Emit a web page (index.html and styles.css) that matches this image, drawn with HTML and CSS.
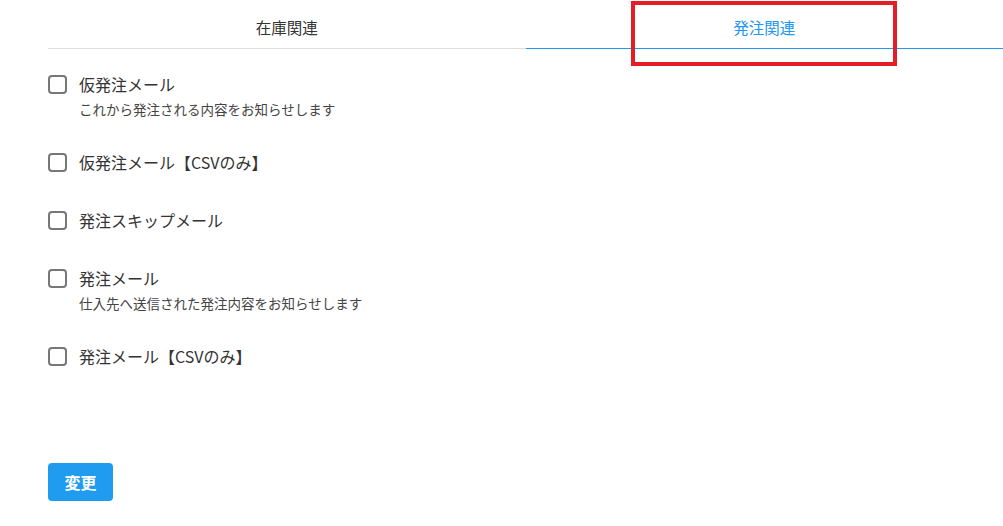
FILE: index.html
```html
<!DOCTYPE html>
<html lang="ja">
<head>
<meta charset="utf-8">
<link rel="stylesheet" href="styles.css">
</head>
<body>
<div class="page">
  <div class="tabs">
    <div class="tab">在庫関連</div>
    <div class="tab active">発注関連</div>
  </div>
  <div class="list">
    <label class="item">
      <input type="checkbox" class="cb">
      <div class="texts">
        <div class="name">仮発注メール</div>
        <div class="desc">これから発注される内容をお知らせします</div>
      </div>
    </label>
    <label class="item">
      <input type="checkbox" class="cb">
      <div class="texts">
        <div class="name">仮発注メール【CSVのみ】</div>
      </div>
    </label>
    <label class="item">
      <input type="checkbox" class="cb">
      <div class="texts">
        <div class="name">発注スキップメール</div>
      </div>
    </label>
    <label class="item">
      <input type="checkbox" class="cb">
      <div class="texts">
        <div class="name">発注メール</div>
        <div class="desc">仕入先へ送信された発注内容をお知らせします</div>
      </div>
    </label>
    <label class="item">
      <input type="checkbox" class="cb">
      <div class="texts">
        <div class="name">発注メール【CSVのみ】</div>
      </div>
    </label>
  </div>
  <button class="submit">変更</button>
</div>
<div class="highlight"></div>
</body>
</html>
```

FILE: styles.css
```css
html, body {
  margin: 0;
  padding: 0;
  background: #ffffff;
}
body {
  font-family: "Noto Sans CJK JP", "Noto Sans", sans-serif;
  color: #333333;
  width: 1003px;
  height: 526px;
  overflow: hidden;
  position: relative;
}
.page {
  padding-left: 48px;
}
.tabs {
  display: flex;
  border-bottom: 1px solid #dddddd;
  height: 48px;
}
.tab {
  flex: 1;
  display: flex;
  align-items: center;
  justify-content: center;
  padding-top: 6px;
  font-size: 15.5px;
  color: #333333;
  box-sizing: border-box;
}
.tab.active {
  color: #2196f3;
  border-bottom: 1px solid #2196f3;
  margin-bottom: -1px;
}
.list {
  padding-top: 23px;
  display: flex;
  flex-direction: column;
}
.item {
  display: flex;
  align-items: flex-start;
  padding-bottom: 34px;
}
.cb {
  appearance: none;
  -webkit-appearance: none;
  margin: 3px 12px 0 0;
  width: 19px;
  height: 19px;
  border: 2px solid #777777;
  border-radius: 4px;
  box-sizing: border-box;
  background: #fff;
  flex: none;
}
.name {
  font-size: 16px;
  line-height: 24px;
  color: #333333;
}
.desc {
  font-size: 13.5px;
  line-height: 14px;
  margin-top: 6px;
  color: #444444;
}
.submit {
  margin-top: 61px;
  width: 65px;
  height: 38px;
  border: none;
  border-radius: 4px;
  background: #1f9cf0;
  color: #ffffff;
  font-family: "Noto Sans CJK JP", "Noto Sans", sans-serif;
  font-size: 16px;
  font-weight: bold;
  padding: 0;
}
.highlight {
  position: absolute;
  left: 631px;
  top: 1px;
  width: 266px;
  height: 65px;
  border: 4px solid #e41e24;
  box-sizing: border-box;
}
```
